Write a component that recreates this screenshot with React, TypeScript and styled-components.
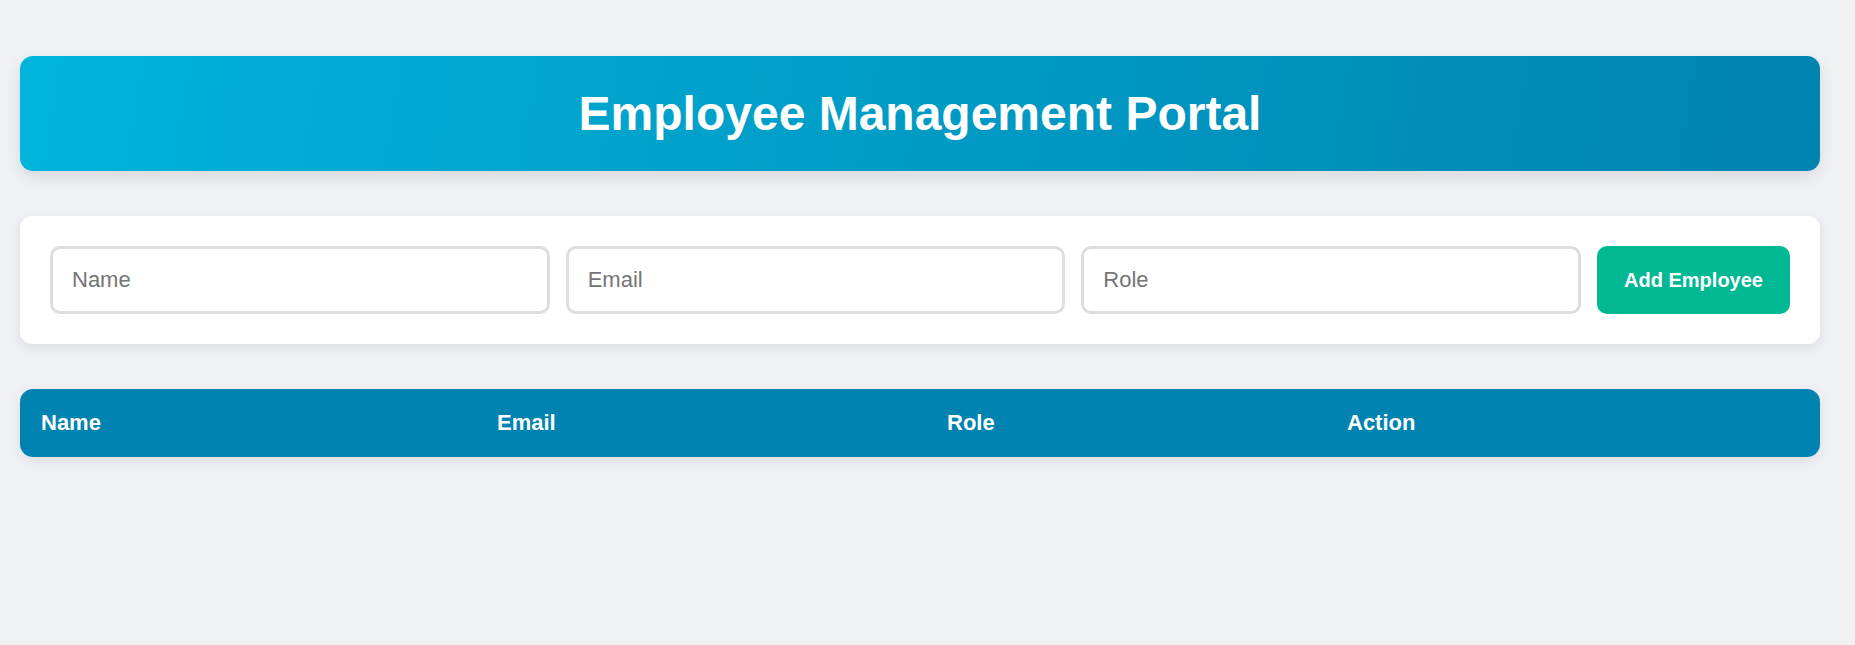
import React from "react";
import styled, { createGlobalStyle } from "styled-components";

const GlobalStyle = createGlobalStyle`
  html, body {
    margin: 0;
    padding: 0;
    background: #f0f1f5;
    font-family: "Liberation Sans", Arial, sans-serif;
  }
`;

const Page = styled.div`
  box-sizing: border-box;
  width: 1800px;
  margin: 0 0 0 20px;
  padding: 56px 0 40px;
  display: flex;
  flex-direction: column;
  gap: 45px;
`;

const Header = styled.header`
  border-radius: 13px;
  padding: 30px 20px;
  background: linear-gradient(100deg, #00b4db 0%, #0083b0 100%);
  box-shadow: 0 6px 16px rgba(0, 0, 0, 0.1);
  text-align: center;
`;

const Title = styled.h1`
  margin: 0;
  color: #ffffff;
  font-size: 48px;
  font-weight: 700;
  line-height: 55px;
`;

const FormCard = styled.div`
  background: #ffffff;
  border-radius: 12px;
  padding: 30px;
  box-shadow: 0 4px 14px rgba(0, 0, 0, 0.09);
  display: flex;
  gap: 16px;
  align-items: stretch;
`;

const Field = styled.input`
  flex: 1;
  min-width: 0;
  box-sizing: border-box;
  height: 68px;
  padding: 0 19px;
  border: 3px solid #dddddd;
  border-radius: 10px;
  font-family: "Liberation Sans", Arial, sans-serif;
  font-size: 22px;
  color: #333;
  outline: none;
  &::placeholder {
    color: #757575;
  }
`;

const AddButton = styled.button`
  flex: 0 0 193px;
  height: 68px;
  border: none;
  border-radius: 10px;
  background: #00b894;
  color: #ffffff;
  font-family: "Liberation Sans", Arial, sans-serif;
  font-size: 20px;
  font-weight: 700;
  cursor: pointer;
`;

const TableWrap = styled.div`
  border-radius: 13px;
  overflow: hidden;
  box-shadow: 0 4px 14px rgba(0, 0, 0, 0.08);
`;

const Table = styled.table`
  width: 100%;
  border-collapse: collapse;
  table-layout: fixed;
`;

const HeadCell = styled.th<{ $w: number }>`
  width: ${(p) => p.$w}px;
  box-sizing: border-box;
  background: #0083b0;
  color: #ffffff;
  text-align: left;
  font-size: 22px;
  font-weight: 700;
  line-height: 25px;
  padding: 21px 22px 22px 21px;
`;

const columns = [
  { label: "Name", w: 456 },
  { label: "Email", w: 450 },
  { label: "Role", w: 400 },
  { label: "Action", w: 494 },
];

export default function App() {
  return (
    <>
      <GlobalStyle />
      <Page>
        <Header>
          <Title>Employee Management Portal</Title>
        </Header>
        <FormCard>
          <Field placeholder="Name" />
          <Field placeholder="Email" />
          <Field placeholder="Role" />
          <AddButton>Add Employee</AddButton>
        </FormCard>
        <TableWrap>
          <Table>
            <thead>
              <tr>
                {columns.map((c) => (
                  <HeadCell key={c.label} $w={c.w}>
                    {c.label}
                  </HeadCell>
                ))}
              </tr>
            </thead>
            <tbody />
          </Table>
        </TableWrap>
      </Page>
    </>
  );
}
